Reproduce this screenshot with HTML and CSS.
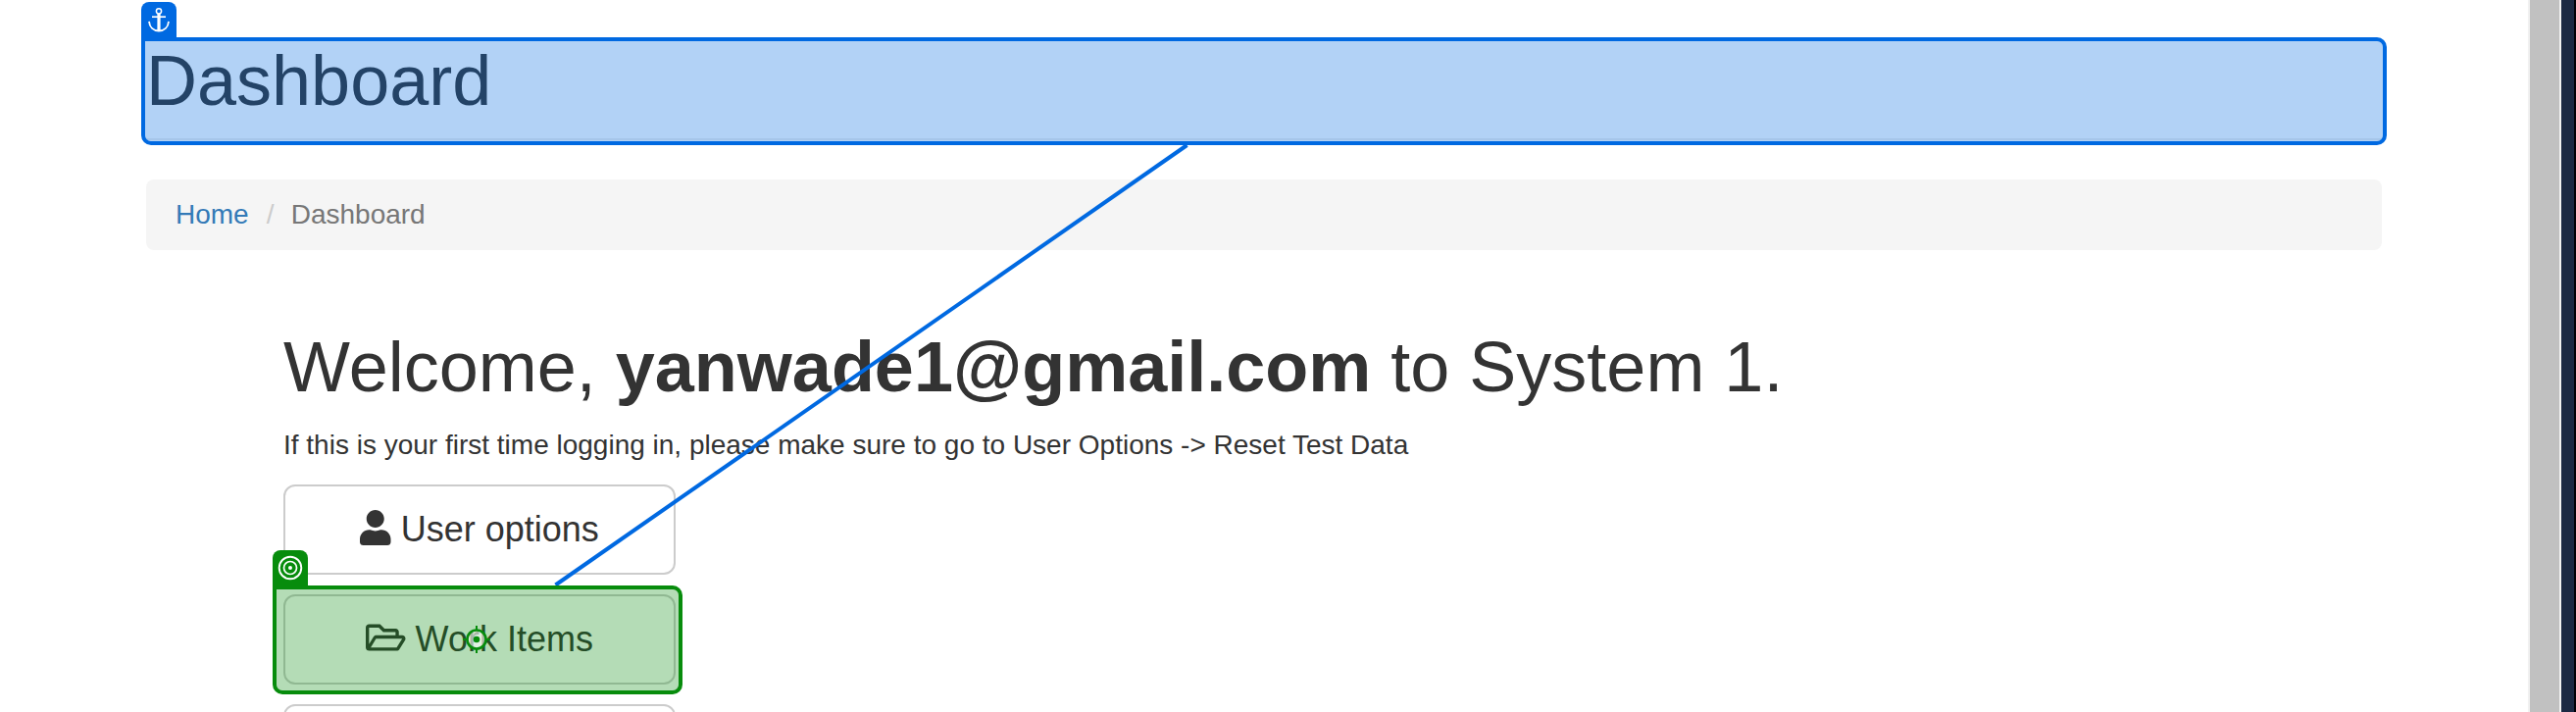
FILE: index.html
```html
<!DOCTYPE html>
<html lang="en">
<head>
<meta charset="utf-8">
<title>Dashboard</title>
<link rel="stylesheet" href="styles.css">
</head>
<body>
<div class="window">
  <main class="content">
    <header class="page-header"><h1>Dashboard</h1></header>
    <nav class="breadcrumb">
      <a class="crumb-link" href="#">Home</a>
      <span class="crumb-sep">/</span>
      <span class="crumb-active">Dashboard</span>
    </nav>
    <section class="welcome">
      <h1>Welcome, <strong>yanwade1@gmail.com</strong> to System 1.</h1>
      <p>If this is your first time logging in, please make sure to go to User Options -&gt; Reset Test Data</p>
      <div class="menu">
        <a class="btn"><svg class="icon icon-user" viewBox="0 0 448 512"><path d="M224 256c70.7 0 128-57.3 128-128S294.7 0 224 0 96 57.3 96 128s57.3 128 128 128zm89.6 32h-16.7c-22.2 10.2-46.900 16-72.900 16s-50.600-5.800-72.900-16h-16.700C60.200 288 0 348.200 0 422.400V464c0 26.500 21.500 48 48 48h352c26.500 0 48-21.500 48-48v-41.600c0-74.200-60.200-134.400-134.400-134.400z"/></svg> User options</a>
        <a class="btn"><svg class="icon icon-folder" viewBox="0 0 576 512"><path d="M527.9 224H480v-48c0-26.500-21.500-48-48-48H272l-64-64H48C21.500 64 0 85.500 0 112v288c0 26.500 21.500 48 48 48h400c16.500 0 31.900-8.500 40.700-22.600l79.900-128c20-31.900-3-73.400-40.700-73.400zM48 118c0-3.300 2.700-6 6-6h134.100l64 64H426c3.300 0 6 2.700 6 6v42H152c-16.800 0-32.400 8.800-41.100 23.200L48 351.400zm400 282H72l77.200-128H528z"/></svg> Work Items</a>
        <a class="btn"></a>
      </div>
    </section>
  </main>
  <div class="scrollbar"><div class="thumb"></div></div>
  <div class="desktop-edge"></div>
</div>

<div class="marker marker-anchor">
  <div class="marker-tab">
    <svg width="36" height="36" viewBox="0 0 36 36" fill="none" stroke="#fff">
      <circle cx="18" cy="9.300" r="2.600" stroke-width="1.500"/>
      <path d="M18 12v17" stroke-width="3.200"/>
      <path d="M11 15.200h14" stroke-width="1.700"/>
      <path d="M8 19.800c.6 6 4.400 9.700 10 9.700s9.400-3.700 10-9.700" stroke-width="1.800"/>
    </svg>
  </div>
</div>
<svg class="connector" width="2627" height="726"><path d="M1210.500 148L566.500 596.500" stroke="#0069e1" stroke-width="4"/></svg>
<div class="marker marker-target">
  <div class="marker-tab">
    <svg width="36" height="36" viewBox="0 0 36 36" fill="none" stroke="#fff">
      <circle cx="18" cy="18" r="11.300" stroke-width="1.900"/>
      <circle cx="18" cy="18" r="6.500" stroke-width="1.700"/>
      <circle cx="18" cy="18" r="2" fill="#fff" stroke="none"/>
    </svg>
  </div>
</div>
<svg class="crosshair" width="30" height="30" viewBox="0 0 30 30">
  <circle cx="15" cy="15" r="9.500" fill="#fff" fill-opacity=".6" stroke="#078c0c" stroke-width="2.600"/>
  <path d="M15 1v5M15 24v5M1 15h5M24 15h5" stroke="#078c0c" stroke-width="2"/>
  <circle cx="15" cy="15" r="3.300" fill="#078c0c"/>
</svg>
</body>
</html>
```
FILE: styles.css
```css
* { box-sizing: border-box; }
body {
  margin: 0;
  height: 726px;
  position: relative;
  overflow: hidden;
  background: #fff;
  color: #333;
  font: 28px/40px "Liberation Sans", Arial, sans-serif;
}
.window { display: flex; height: 726px; overflow: hidden; }
.content { flex: 1; padding: 43px 149px 0; }
h1 { margin: 0; font-size: 72px; line-height: 79.200px; font-weight: 400; }
.page-header { padding-bottom: 18.500px; border-bottom: 2px solid #eee; }
.breadcrumb {
  display: flex;
  height: 72px;
  margin-top: 40px;
  padding: 16px 30px;
  border-radius: 8px;
  background: #f5f5f5;
}
.crumb-link { color: #337ab7; text-decoration: none; }
.crumb-sep { width: 43px; padding-left: 18px; color: #ccc; }
.crumb-active { color: #777; }
.welcome { padding: 80.300px 0 0 140px; }
.welcome p { margin: 19.400px 0 20px; }
.menu { display: flex; flex-direction: column; gap: 20px; width: 400px; }
.btn {
  height: 92px;
  padding: 20px 0;
  border: 2px solid #ccc;
  border-radius: 12px;
  font-size: 36px;
  line-height: 48px;
  text-align: center;
  white-space: nowrap;
}
.icon { height: 36px; fill: currentColor; vertical-align: -4.500px; }
.icon-user { width: 31.500px; }
.icon-folder { width: 40.500px; }
.scrollbar { width: 34px; padding: 0 2px; background: #f1f1f1; }
.thumb { height: 100%; background: #c1c1c1; }
.desktop-edge { width: 15px; background: #1b2943; border-right: 2px solid #000006; }

/* Selection markers float over the page */
.marker { position: absolute; border: 4px solid; border-radius: 0 10px 10px 10px; }
.marker-tab {
  position: absolute;
  left: -4px;
  top: -40px;
  width: 36px;
  height: 37px;
  border-radius: 8px 8px 0 0;
}
.marker-tab svg { display: block; }
.marker-anchor {
  left: 144px; top: 38px; width: 2290px; height: 110px;
  border-color: #0069e1;
  background: rgba(0, 105, 225, .3);
  background-clip: padding-box;
}
.marker-anchor .marker-tab { background: #0069e1; }
.marker-target {
  left: 278px; top: 597px; width: 418px; height: 111px;
  border-color: #078c0c;
  background: rgba(7, 140, 12, .3);
  background-clip: padding-box;
}
.marker-target .marker-tab { background: #078c0c; }
.connector { position: absolute; left: 0; top: 0; }
.crosshair { position: absolute; left: 471px; top: 637px; }
```
